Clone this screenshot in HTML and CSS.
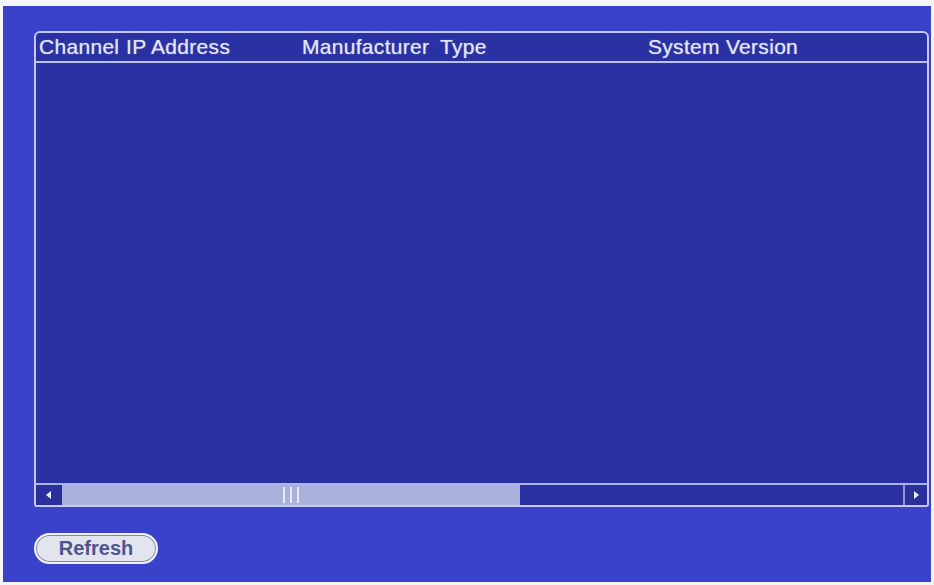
FILE: index.html
```html
<!DOCTYPE html>
<html>
<head>
<meta charset="utf-8">
<link rel="stylesheet" href="styles.css">
</head>
<body>
<div class="panel">
  <div class="table">
    <div class="thead">
      <span class="c1">Channel</span>
      <span class="c2">IP Address</span>
      <span class="c3">Manufacturer</span>
      <span class="c4">Type</span>
      <span class="c5">System Version</span>
    </div>
    <div class="tbody"></div>
    <div class="hscroll">
      <div class="sbtn left"><svg width="8" height="10" viewBox="0 0 8 10"><path d="M6 1 L1 5 L6 9 Z" fill="#e8ecff"/></svg></div>
      <div class="thumb"><div class="grip"><i></i><i></i><i></i></div></div>
      <div class="track"></div>
      <div class="sbtn right"><svg width="8" height="10" viewBox="0 0 8 10"><path d="M2 1 L7 5 L2 9 Z" fill="#e8ecff"/></svg></div>
    </div>
  </div>
  <div class="actions">
    <button class="btn">Refresh</button>
  </div>
</div>
</body>
</html>
```
FILE: styles.css
```css
html, body {
  margin: 0;
  padding: 0;
  background: #f4f5fa;
}
body {
  width: 934px;
  height: 585px;
  overflow: hidden;
  font-family: "Liberation Sans", Arial, sans-serif;
}
.panel {
  margin: 6px 0 0 3px;
  width: 928px;
  height: 576px;
  background: #3a42ca;
  padding: 25px 0 0 31px;
  box-sizing: border-box;
}
.table {
  width: 895px;
  height: 476px;
  box-sizing: border-box;
  border: 2px solid #c3c9f2;
  border-radius: 6px 6px 3px 3px;
  background: #2a31a2;
  display: flex;
  flex-direction: column;
  overflow: hidden;
}
.thead {
  height: 28px;
  border-bottom: 2px solid #b9c1ef;
  display: flex;
  align-items: center;
  color: #e2e5f8;
  font-size: 21px;
  letter-spacing: 0.3px;
  padding-left: 3px;
  text-shadow: 0 0 1px rgba(230,235,255,0.7);
}
.thead span { white-space: nowrap; }
.c1 { width: 87px; }
.c2 { width: 176px; }
.c3 { width: 138px; }
.c4 { width: 208px; }
.c5 { flex: 1; }
.tbody {
  flex: 1;
}
.hscroll {
  height: 20px;
  border-top: 2px solid #aab3ea;
  display: flex;
}
.sbtn {
  background: #2a2f9c;
  display: flex;
  align-items: center;
  justify-content: center;
}
.sbtn.left { width: 26px; }
.sbtn.right { width: 22px; border-left: 2px solid #8e98dc; }
.thumb {
  width: 458px;
  background: #a7b1dc;
  position: relative;
}
.grip {
  position: absolute;
  left: 221px;
  top: 2px;
  bottom: 2px;
  width: 16px;
  display: flex;
  justify-content: space-between;
}
.grip i {
  display: block;
  width: 2px;
  background: #e8ecfa;
}
.track {
  flex: 1;
  background: #2a30a0;
}
.actions {
  margin-top: 26px;
  display: flex;
}
.btn {
  width: 124px;
  height: 31px;
  box-sizing: border-box;
  border: 2px solid #f0f2fb;
  border-radius: 16px;
  background: #e3e5ee;
  box-shadow: inset 0 0 0 1px #7e85a8;
  color: #4c5590;
  font-family: "Liberation Sans", Arial, sans-serif;
  font-weight: bold;
  font-size: 20px;
  padding: 0;
  line-height: 27px;
  text-align: center;
}
```
